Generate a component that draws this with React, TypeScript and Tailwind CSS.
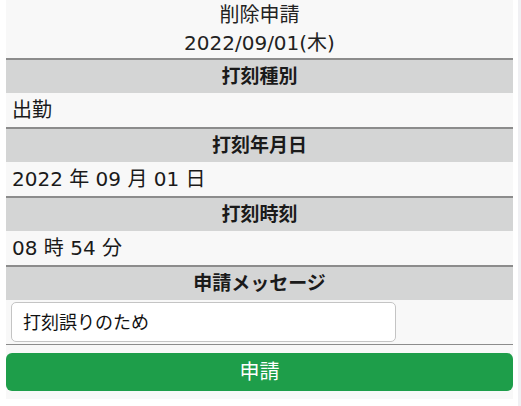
import React from 'react';

const font = { fontFamily: '"DejaVu Sans", "Noto Sans CJK JP", sans-serif' };

const Header: React.FC<{ label: string }> = ({ label }) => (
  <div className="border-t-2 border-[#8c8c8c] bg-[#d4d5d5] h-[35px] flex items-center justify-center text-[19px] font-bold text-[#1a1a1a]">
    {label}
  </div>
);

const Row: React.FC<{ value: string }> = ({ value }) => (
  <div className="h-[34px] flex items-center px-[6px] text-[20px] text-[#1a1a1a]">{value}</div>
);

export default function App() {
  return (
    <div className="w-[521px] h-[406px] bg-white flex overflow-hidden" style={font}>
      <div className="w-[6px]" />
      <div className="w-[507px] h-[399px] bg-[#f8f8f8] flex flex-col">
        <div className="h-[58px] flex flex-col items-center justify-center text-[20px] leading-[28px] text-[#222]">
          <div>削除申請</div>
          <div>2022/09/01(木)</div>
        </div>
        <Header label="打刻種別" />
        <Row value="出勤" />
        <Header label="打刻年月日" />
        <Row value="2022 年 09 月 01 日" />
        <Header label="打刻時刻" />
        <Row value="08 時 54 分" />
        <Header label="申請メッセージ" />
        <div className="pt-[2px] pb-[2px] px-[5px] border-b border-[#8c8c8c]">
          <div className="w-[385px] h-[40px] bg-white border border-[#c4c4c4] rounded-[5px] flex items-center px-[11px] text-[18px] text-[#111]">
            打刻誤りのため
          </div>
        </div>
        <button className="mt-[8px] h-[38px] w-full rounded-[6px] bg-[#1e9e4a] text-white text-[20px] flex items-center justify-center">
          申請
        </button>
      </div>
      <div className="w-[5px]" />
      <div className="w-[3px] bg-[#f0f0f3]" />
    </div>
  );
}
